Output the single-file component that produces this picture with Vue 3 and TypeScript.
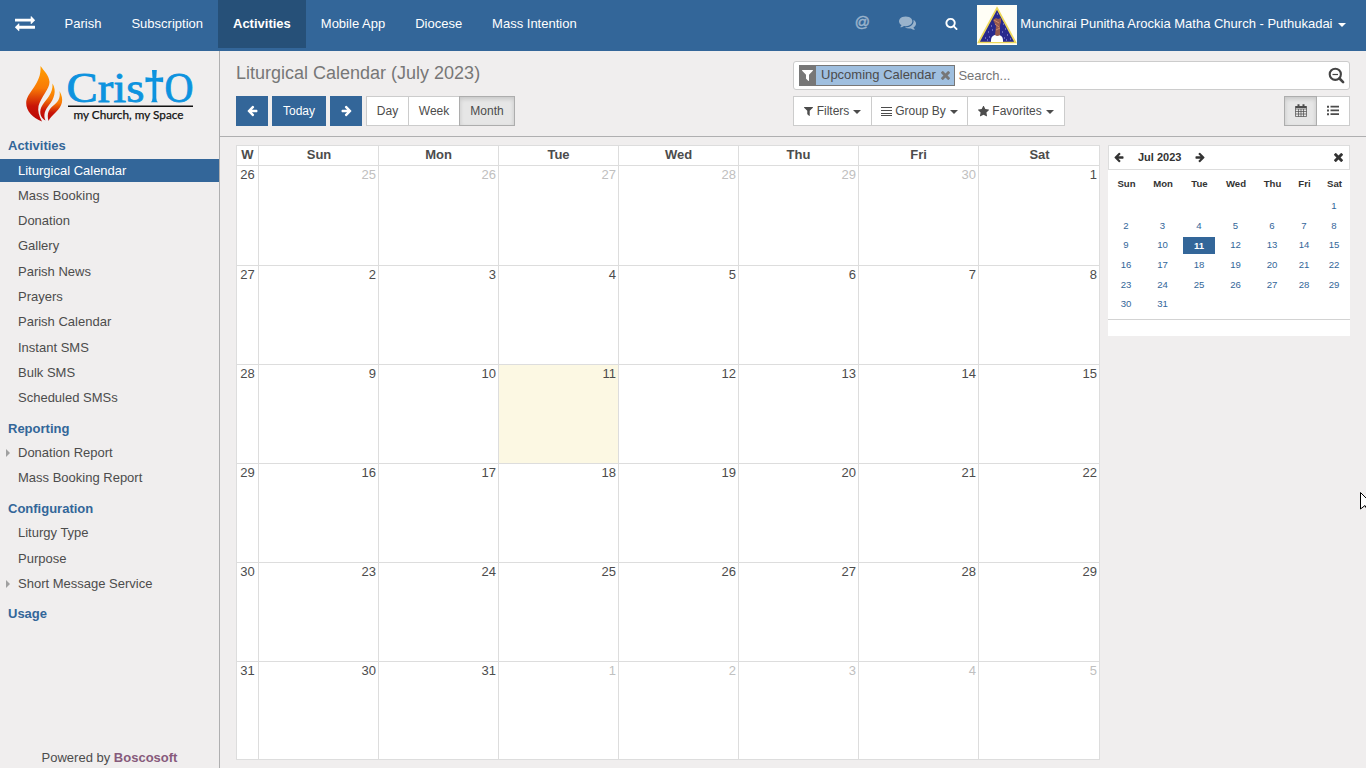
<script setup lang="ts">
const tabs: string[] = ['Parish', 'Subscription', 'Activities', 'Mobile App', 'Diocese', 'Mass Intention']

interface MenuItem { label: string; active?: boolean; arrow?: boolean }
interface Section { title: string; items: MenuItem[] }
const sections: Section[] = [
  {
    title: 'Activities',
    items: [
      { label: 'Liturgical Calendar', active: true },
      { label: 'Mass Booking' },
      { label: 'Donation' },
      { label: 'Gallery' },
      { label: 'Parish News' },
      { label: 'Prayers' },
      { label: 'Parish Calendar' },
      { label: 'Instant SMS' },
      { label: 'Bulk SMS' },
      { label: 'Scheduled SMSs' },
    ],
  },
  { title: 'Reporting', items: [{ label: 'Donation Report', arrow: true }, { label: 'Mass Booking Report' }] },
  {
    title: 'Configuration',
    items: [{ label: 'Liturgy Type' }, { label: 'Purpose' }, { label: 'Short Message Service', arrow: true }],
  },
  { title: 'Usage', items: [] },
]

const days: string[] = ['Sun', 'Mon', 'Tue', 'Wed', 'Thu', 'Fri', 'Sat']
interface Day { n: number; other: boolean; today: boolean }
const weeks = [0, 1, 2, 3, 4, 5].map((w) => ({
  no: 26 + w,
  days: days.map((_, d): Day => {
    const v = w * 7 + d - 5
    return { n: v < 1 ? v + 30 : v > 31 ? v - 31 : v, other: v < 1 || v > 31, today: v === 11 }
  }),
}))

const icons = {
  exchange: 'M1792 1184v192q0 13-9.5 22.5t-22.5 9.5h-1376v192q0 13-9.5 22.5t-22.5 9.5q-12 0-24-10l-319-320q-9-9-9-22 0-14 9-23l320-320q9-9 23-9 13 0 22.5 9.5t9.5 22.5v192h1376q13 0 22.5 9.5t9.5 22.5zm0-544q0 14-9 23l-320 320q-9 9-23 9-13 0-22.5-9.5t-9.5-22.5v-192h-1376q-13 0-22.5-9.5t-9.5-22.5v-192q0-13 9.5-22.5t22.5-9.5h1376v-192q0-14 9-23t23-9q12 0 24 10l319 319q9 9 9 23z',
  left: 'M1536 896v128q0 53-32.5 90.5t-84.5 37.5h-704l293 294q38 36 38 90t-38 90l-75 76q-37 37-90 37-52 0-91-37l-651-652q-37-37-37-90 0-52 37-91l651-650q38-38 91-38 52 0 90 38l75 74q38 38 38 91t-38 91l-293 293h704q52 0 84.5 37.5t32.5 90.5z',
  right: 'M1536 960q0 54-37 91l-651 651q-39 37-91 37-51 0-90-37l-75-75q-38-38-38-91t38-91l293-293h-704q-52 0-84.5-37.5t-32.5-90.5v-128q0-53 32.5-90.5t84.5-37.5h704l-293-294q-38-36-38-90t38-90l75-75q38-38 90-38 53 0 91 38l651 651q37 35 37 90z',
  filter: 'M1595 295q17 41-14 70l-493 493v742q0 42-39 59-13 5-25 5-27 0-45-19l-256-256q-19-19-19-45v-486l-493-493q-31-29-14-70 17-39 59-39h1280q42 0 59 39z',
  star: 'M1728 647q0 22-26 48l-363 354 86 500q1 7 1 20 0 21-10.5 35.5t-30.5 14.5q-19 0-40-12l-449-236-449 236q-22 12-40 12-21 0-31.5-14.5t-10.5-35.5q0-6 2-20l86-500-364-354q-25-27-25-48 0-37 56-46l502-73 225-455q19-41 49-41t49 41l225 455 502 73q56 9 56 46z',
  times: 'M1490 1322q0 40-28 68l-136 136q-28 28-68 28t-68-28l-294-294-294 294q-28 28-68 28t-68-28l-136-136q-28-28-28-68t28-68l294-294-294-294q-28-28-28-68t28-68l136-136q28-28 68-28t68 28l294 294 294-294q28-28 68-28t68 28l136 136q28 28 28 68t-28 68l-294 294 294 294q28 28 28 68z',
  search: 'M1216 832q0-185-131.5-316.5t-316.5-131.5-316.5 131.5-131.5 316.5 131.5 316.5 316.5 131.5 316.5-131.5 131.5-316.5zm512 832q0 52-38 90t-90 38q-54 0-90-38l-343-342q-179 124-399 124-143 0-273.5-55.5t-225-150-150-225-55.5-273.5 55.5-273.5 150-225 225-150 273.5-55.5 273.5 55.5 225 150 150 225 55.5 273.5q0 220-124 399l343 343q37 37 37 90z',
  comments: 'M1408 768q0 139-94 257t-256.5 186.5-353.5 68.5q-86 0-176-16-124 88-278 128-36 9-86 16h-3q-11 0-20.5-8t-11.5-21q-1-3-1-6.5t.5-6.5 2-6l2.5-5 3.5-5.5 4-5 4.5-5 4-4.5q5-6 23-25t26-29.5 22.5-29 25-38.5 20.5-44q-124-72-195-177t-71-224q0-139 94-257t256.5-186.5 353.5-68.5 353.5 68.5 256.5 186.5 94 257zm384 256q0 120-71 224.5t-195 176.5q10 24 20.5 44t25 38.5 22.5 29 26 29.5 23 25q1 1 4 4.5t4.5 5 4 5 3.500 5.500l2.500 5 2 6 .5 6.500-1 6.500q-3 14-13 22t-22 7q-50-7-86-16-154-40-278-128-90 16-176 16-271 0-472-132 58 4 88 4 161 0 309-45t264-129q125-92 192-212t67-254q0-77-23-152 129 71 204 178t75 230z',
}
</script>

<template>
  <div class="page">
    <header class="top">
      <svg class="swap" viewBox="0 0 1792 1792"><path :d="icons.exchange" /></svg>
      <nav class="tabs">
        <a v-for="t in tabs" :key="t" :class="{ on: t === 'Activities' }">{{ t }}</a>
      </nav>
      <div class="tools">
        <span class="at">@</span>
        <svg class="chat" viewBox="0 0 1792 1792"><path :d="icons.comments" /></svg>
        <svg class="find" viewBox="0 0 1792 1792"><path :d="icons.search" /></svg>
        <svg class="avatar" viewBox="0 0 40 40">
          <rect width="40" height="40" fill="#fffef6" />
          <path d="M20 3L38.5 37.5H1.5z" fill="#29298c" stroke="#eed85a" stroke-width="1.7" />
          <path d="M14 37v-2a6 5.500 0 0 1 12 0v2z" fill="#fff" />
          <path d="M16 15l3-2 2 1 3-1 0 4-1 3 0 10q-3 2-5 0l1-9z" fill="#96594e" />
          <path d="M17 15l5 3M18 19l4 3M19 25l4-2" stroke="#d08b68" stroke-width="1" />
          <path d="M11 27h1M14 21h1M8 33h1M12 32h1M28 24h1M30 30h1M33 34h1M27 33h1M20 9h1M15 25h1M26 19h1M29 35h1M10 35h1M25 27h1" stroke="#a9a9e6" stroke-width="1" />
        </svg>
        <span class="user">Munchirai Punitha Arockia Matha Church - Puthukadai</span>
        <i class="caret" />
      </div>
    </header>
    <div class="body">
      <aside class="side">
        <svg class="logo" viewBox="0 0 190 72" width="190" height="72">
          <defs>
            <linearGradient id="flame" x1="0" y1="0" x2="0" y2="1">
              <stop offset="0" stop-color="#ffa000" />
              <stop offset=".4" stop-color="#f97a05" />
              <stop offset=".72" stop-color="#c91507" />
              <stop offset="1" stop-color="#b90505" />
            </linearGradient>
          </defs>
          <g fill="url(#flame)">
            <path d="M25.500 8C29 13 34 17 34.500 24C34.500 31 26 39 23.500 48C22.500 53 24 58 27 63.500C18 60 11 53 11.200 45C11.500 34 27 26 25.500 8z" />
            <path d="M37.500 25.500C42 33 39 41 34 47C30 52 28 57 30.500 62.500C25 60 23.500 53 27.500 47C32 40 38 36 37.500 25.500z" />
            <path d="M44.500 33C49.500 42 47 48 41 54C37 58 34.500 60 33.500 63C31.500 55 34 51 39 47C44 43 45.500 39 44.500 33z" />
          </g>
          <text class="brand" x="51.500" y="43.800" textLength="78" lengthAdjust="spacingAndGlyphs">Cris</text>
          <path d="M137 12h4.800l-.5 8 6.900-.8v5l-6.900-.8V40q0 3 1.700 4.200h-7.200q1.700-1.200 1.700-4.200V23.400l-7 .8v-5l7 .8z" fill="#0d93df" />
          <text class="brand" x="149.500" y="43.800" textLength="29" lengthAdjust="spacingAndGlyphs">O</text>
          <path d="M53 48.200h125" stroke="#111" stroke-width="1.500" />
          <text class="motto" x="58.500" y="60.500" textLength="110" lengthAdjust="spacingAndGlyphs">my Church, my Space</text>
        </svg>
        <section v-for="s in sections" :key="s.title" class="sec">
          <h4>{{ s.title }}</h4>
          <ul v-if="s.items.length">
            <li v-for="m in s.items" :key="m.label" :class="{ on: m.active, arrow: m.arrow }">{{ m.label }}</li>
          </ul>
        </section>
        <footer>Powered by <b>Boscosoft</b></footer>
      </aside>
      <main class="main">
        <div class="control">
          <div class="leftside">
            <h2>Liturgical Calendar (July 2023)</h2>
            <div class="row">
              <button class="btn blue nav"><svg class="ar" viewBox="0 64 1600 1792"><path :d="icons.left" /></svg></button>
              <button class="btn blue go-today">Today</button>
              <button class="btn blue nav"><svg class="ar" viewBox="0 64 1600 1792"><path :d="icons.right" /></svg></button>
              <div class="group modes">
                <button class="btn day">Day</button>
                <button class="btn week">Week</button>
                <button class="btn month pressed">Month</button>
              </div>
            </div>
          </div>
          <div class="rightside">
            <div class="searchbox">
              <span class="facet">
                <span class="ficon"><svg viewBox="190 128 1410 1664"><path :d="icons.filter" /></svg></span>
                <span class="flabel">Upcoming Calendar</span>
                <svg class="fx" viewBox="302 366 1188 1188"><path :d="icons.times" /></svg>
              </span>
              <span class="ph">Search...</span>
              <svg class="minus" viewBox="0 0 17 17">
                <circle cx="7.300" cy="7.300" r="5.600" fill="none" stroke="#444" stroke-width="2.100" />
                <path d="M11.500 11.500l3.600 3.600" stroke="#444" stroke-width="2.600" stroke-linecap="round" />
                <path d="M4.500 7.500h5.500" stroke="#444" stroke-width="1.200" />
              </svg>
            </div>
            <div class="row between">
              <div class="group">
                <button class="btn f1"><svg class="i9" viewBox="190 128 1410 1664"><path :d="icons.filter" /></svg>Filters<i class="caret" /></button>
                <button class="btn f2"><svg class="i11" viewBox="0 0 11 11"><path d="M0 1h11v1H0zM0 4h11v1H0zM0 7h11v1H0zM0 9h11v1H0z" /></svg>Group By<i class="caret" /></button>
                <button class="btn f3"><svg class="i11" viewBox="64 64 1664 1664"><path :d="icons.star" /></svg>Favorites<i class="caret" /></button>
              </div>
              <div class="group">
                <button class="btn v1 pressed">
                  <svg class="cal" viewBox="0 0 12 13"><path d="M.5 2.500h11v10H.5zM.5 5h11M.5 7.500h11M.5 10h11M3.500 5v7.500M6 5v7.500M8.500 5v7.500" fill="none" stroke="#4c4c4c" stroke-width=".7" /><path d="M.5 2h11v2H.5zM2.500 .3h2V4h-2zM7.500 .3h2V4h-2z" /></svg>
                </button>
                <button class="btn v2">
                  <svg class="list" viewBox="0 0 12 11"><path d="M0 .8h2v2H0zM0 4.500h2v2H0zM0 8.200h2v2H0zM3.500 .8H12v1.800H3.500zM3.500 4.500H12v1.800H3.500zM3.500 8.200H12v1.800H3.500z" /></svg>
                </button>
              </div>
            </div>
          </div>
        </div>
        <div class="content">
          <div class="cal-grid">
            <div class="hd">W</div>
            <div v-for="d in days" :key="d" class="hd" :class="{ edge: d === 'Sun' || d === 'Sat' }">{{ d }}</div>
            <template v-for="w in weeks" :key="w.no">
              <div class="wk">{{ w.no }}</div>
              <div v-for="d in w.days" :key="d.n + '-' + d.other" class="dy" :class="{ other: d.other, today: d.today }">{{ d.n }}</div>
            </template>
          </div>
          <div class="mini">
            <div class="mhead">
              <svg class="ml" viewBox="0 64 1600 1792"><path :d="icons.left" /></svg>
              <span>Jul 2023</span>
              <svg class="ml" viewBox="0 64 1600 1792"><path :d="icons.right" /></svg>
              <svg class="mx" viewBox="302 366 1188 1188"><path :d="icons.times" /></svg>
            </div>
            <div class="mgrid">
              <b v-for="d in days" :key="d">{{ d }}</b>
              <template v-for="w in weeks" :key="w.no">
                <span v-for="d in w.days" :key="d.n + '-' + d.other" :class="{ now: d.today }"><em v-if="!d.other">{{ d.n }}</em></span>
              </template>
            </div>
            <div class="mfoot" />
          </div>
        </div>
      </main>
    </div>
    <svg class="cursor" viewBox="0 0 6 19" width="6" height="19"><path d="M.5 .5L12.500 12.500H7.500L10 17.500 7.500 18.500 5 13.500 .5 17z" fill="#fff" stroke="#000" /></svg>
  </div>
</template>

<style>
html, body { margin: 0; overflow: hidden; }
</style>

<style scoped>
.page { position: relative; width: 1366px; height: 768px; display: flex; flex-direction: column; overflow: hidden; background: #f0eeee; color: #4c4c4c; font: 13px/18px "Liberation Sans", Arial, sans-serif; }
.page * { box-sizing: border-box; }
svg { display: block; flex: none; fill: currentColor; }
.top { height: 51px; flex: none; background: #336699; color: #fff; display: flex; align-items: flex-start; }
.swap { width: 20px; height: 20px; margin: 13px 0 0 15px; }
.tabs { display: flex; margin-left: 14.600px; }
.tabs a { height: 48px; padding: 0 15px; line-height: 47px; white-space: nowrap; }
.tabs a.on { background: #265078; font-weight: bold; }
.tools { margin-left: auto; display: flex; align-items: center; height: 50px; padding-right: 20px; }
.at { width: 15px; margin-right: 29px; font-size: 15px; line-height: 16px; margin-top: -6px; opacity: .5; -webkit-text-stroke: .4px #fff; }
.chat { width: 17px; height: 17px; margin: -6px 29px 0 0; opacity: .5; }
.find { width: 13px; height: 13px; margin: -3px 19px 0 0; }
.avatar { width: 40px; height: 40px; }
.user { margin: -3px 5px 0 3.500px; white-space: nowrap; }
.caret { display: inline-block; border: 4px solid transparent; border-top-color: currentColor; border-bottom: 0; }
.body { flex: 1; display: flex; min-height: 0; }
.side { width: 220px; flex: none; border-right: 1px solid #afafb0; display: flex; flex-direction: column; }
.logo { margin: 7px 0 4px 15px; }
.brand { font: 43px "Liberation Serif", serif; fill: #0d93df; stroke: #0d93df; stroke-width: .8; }
.motto { font: 12px Lato, sans-serif; fill: #111; stroke: #111; stroke-width: .25; }
.sec { margin-bottom: 8.500px; }
h4 { margin: 0; height: 23px; line-height: 22px; padding-left: 8px; font-size: 13px; color: #336699; }
.sec:nth-of-type(1) h4 { line-height: 24px; }
ul { list-style: none; margin: 0; padding: 1.600px 0 0; display: flex; flex-direction: column; gap: 2.290px; }
.sec + .sec ul { padding-top: .45px; }
li { height: 23px; line-height: 23px; padding-left: 18px; position: relative; }
li.on { background: #336699; color: #fff; }
li.arrow::before { content: ""; position: absolute; left: 6px; top: 8px; border: 4px solid transparent; border-left-color: #a0a0a0; border-right: 0; }
footer { margin: auto 0 1px; text-align: center; }
footer b { color: #875a7b; }
.main { flex: 1; display: flex; flex-direction: column; min-width: 0; }
.control { height: 86px; flex: none; border-bottom: 1px solid #afafb0; padding: 10px 16px 0; display: flex; justify-content: space-between; }
h2 { margin: 0; height: 35px; font-size: 18px; line-height: 24px; font-weight: normal; color: #777; }
.row { display: flex; }
.between { justify-content: space-between; }
.group { display: flex; }
.btn { height: 30px; padding: 0; margin: 0; display: flex; align-items: center; justify-content: center; background: #fff; border: 1px solid #ccc; color: #4c4c4c; font: 12px "Liberation Sans", Arial, sans-serif; }
.group .btn + .btn { margin-left: -1px; }
.btn.blue { background: #336699; border-color: #336699; color: #fff; margin-right: 4px; }
.nav { width: 32px; }
.go-today { width: 54px; }
.ar { width: 11px; height: 12px; }
.btn.pressed { background: #e6e6e6; border-color: #adadad; box-shadow: inset 0 2px 4px rgba(0, 0, 0, .14); position: relative; }
.day { width: 43px; }
.week { width: 52px; }
.month { width: 56px; }
.rightside { width: 557px; }
.searchbox { height: 29px; border: 1px solid #ccc; border-radius: 3px; background: #fff; display: flex; align-items: center; padding: 0 4px 0 5px; margin-bottom: 6px; }
.facet { height: 21px; display: flex; align-items: center; background: #9fbfdf; border: 1px solid #777; padding-right: 4px; margin-top: -1px; }
.ficon { width: 17px; height: 21px; background: #777; color: #fff; display: flex; align-items: center; justify-content: center; margin: -1px 5px -1px -1px; }
.ficon svg { width: 11px; height: 13px; }
.flabel { line-height: 17px; margin-top: -1px; }
.fx { width: 9px; height: 9px; margin: 1px 0 0 5px; color: #777; }
.ph { margin-left: 3.500px; color: #757575; }
.minus { width: 17px; height: 17px; margin-left: auto; }
.btn .caret { margin-left: 4px; margin-top: 1px; }
.f1 { width: 79px; }
.f2 { width: 97px; }
.f3 { width: 98px; }
.i9 { width: 9px; height: 11px; margin-right: 4px; }
.i11 { width: 11px; height: 11px; margin-right: 3px; }
.v1 { width: 33px; }
.v2 { width: 34px; }
.cal { width: 12px; height: 13px; margin-top: -1px; }
.list { width: 12px; height: 11px; margin-top: -1px; }
.content { flex: 1; display: flex; align-items: flex-start; padding: 8px 16px 0; gap: 8px; }
.cal-grid { width: 864px; display: grid; grid-template-columns: 22px repeat(6, 120px) 121px; grid-template-rows: 20px 100px repeat(4, 99px) 98px; border: solid #ddd; border-width: 0 1px 1px 0; background: #fff; }
.cal-grid > div { border: solid #ddd; border-width: 1px 0 0 1px; }
.hd { text-align: center; font-weight: bold; line-height: 17px; }
.hd.edge { padding-left: 1px; }
.wk { text-align: center; line-height: 17px; }
.dy { text-align: right; padding-right: 2px; line-height: 17px; }
.other { color: #c0c0c0; }
.today { background: #fcf8e3; }
.mini { width: 242px; height: 191px; background: #fff; display: flex; flex-direction: column; }
.mhead { height: 25px; border: 1px solid #ddd; display: flex; align-items: center; padding: 0 6px 1px 5px; font: bold 11px "Liberation Sans", Arial, sans-serif; color: #333; }
.mhead span { margin: 0 14px 0 14px; }
.ml { width: 10px; height: 11px; }
.mx { width: 9px; height: 9px; margin: 1px 0 0 auto; }
.mgrid { display: grid; grid-template-columns: 36px 37px 36px 37px 36px 28px 32px; grid-template-rows: 25px repeat(6, 19.600px); justify-items: center; align-items: center; padding-top: 1px; font-size: 9.600px; line-height: 17px; height: 149px; }
.mgrid b { color: #333; padding-left: 1px; }
.mgrid em { font-style: normal; color: #336699; }
.mgrid .now { background: #336699; width: 32px; height: 17px; margin-top: 1px; text-align: center; font-weight: bold; }
.mgrid .now em { color: #fff; }
.mfoot { border-top: 1px solid #d3d3d3; flex: 1; }
.cursor { position: absolute; right: 0; top: 492px; }
.tools { padding-right: 20.500px; }
</style>
